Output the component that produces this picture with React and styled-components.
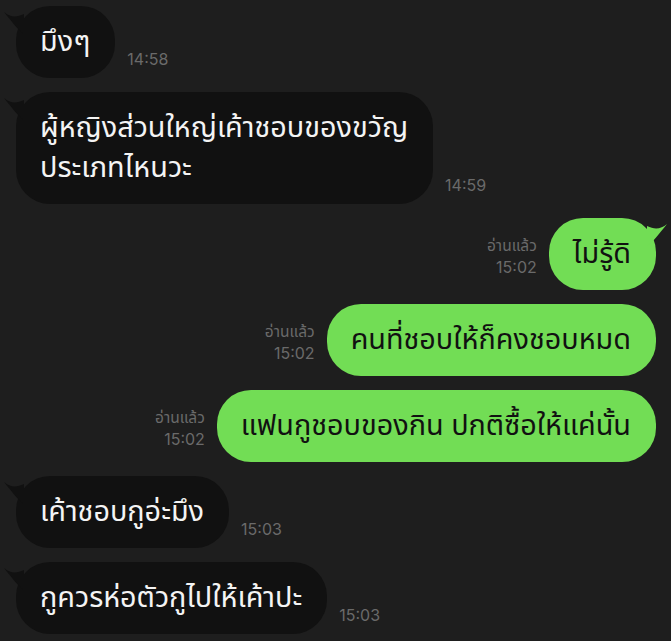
import React from 'react'
import styled, { createGlobalStyle } from 'styled-components'

const thai = '"Noto Sans Thai", "Noto Sans", sans-serif'

const GlobalStyle = createGlobalStyle`
  html, body {
    margin: 0;
    padding: 0;
    background: #1e1e1e;
  }
  body {
    font-family: ${thai};
  }
`

const Chat = styled.div`
  width: 671px;
  height: 641px;
  overflow: hidden;
  box-sizing: border-box;
  padding: 6px 15px 0 16px;
  display: flex;
  flex-direction: column;
  gap: 14px;
  background: #1e1e1e;
`

const Row = styled.div`
  display: flex;
  align-items: flex-end;
  flex-direction: ${p => (p.$mine ? 'row-reverse' : 'row')};
  gap: 12px;
`

const Bubble = styled.div`
  position: relative;
  padding: 16px 25px 16px 24px;
  border-radius: 34px;
  font-size: 28.8px;
  line-height: 40px;
  white-space: pre-line;
  background: ${p => (p.$mine ? '#72dd55' : '#111111')};
  color: ${p => (p.$mine ? '#111111' : '#f4f4f4')};
`

const Tail = styled.svg`
  position: absolute;
  top: 2px;
  width: 20px;
  height: 26px;
  ${p => (p.$mine ? 'right: -11px; transform: scaleX(-1);' : 'left: -12px;')}
`

const Meta = styled.div`
  display: flex;
  flex-direction: column;
  align-items: ${p => (p.$mine ? 'flex-end' : 'flex-start')};
  gap: 2px;
  margin-bottom: ${p => (p.$mine ? '14px' : '10px')};
  color: #6a6a6a;
  font-family: Inter, Roboto, sans-serif;
  font-size: 16px;
  line-height: 18px;
`

const Read = styled.span`
  font-family: ${thai};
  font-size: 15.5px;
  line-height: 18px;
`

const messages = [
  { text: 'มึงๆ', time: '14:58' },
  { text: 'ผู้หญิงส่วนใหญ่เค้าชอบของขวัญ\nประเภทไหนวะ', time: '14:59' },
  { text: 'ไม่รู้ดิ', time: '15:02', mine: true, tail: true },
  { text: 'คนที่ชอบให้ก็คงชอบหมด', time: '15:02', mine: true },
  { text: 'แฟนกูชอบของกิน ปกติซื้อให้แค่นั้น', time: '15:02', mine: true },
  { text: 'เค้าชอบกูอ่ะมึง', time: '15:03' },
  { text: 'กูควรห่อตัวกูไปให้เค้าปะ', time: '15:03' },
]

const Message = ({ text, time, mine, tail }) => (
  <Row $mine={mine}>
    <Bubble $mine={mine}>
      {(tail || !mine) && (
        <Tail $mine={mine} viewBox="0 0 20 26">
          <path
            d="M0 4 C6 9 12 10 20 6 L20 26 C14 22 8 14 0 4 Z"
            fill={mine ? '#72dd55' : '#111111'}
          />
        </Tail>
      )}
      {text}
    </Bubble>
    <Meta $mine={mine}>
      {mine && <Read>อ่านแล้ว</Read>}
      <span>{time}</span>
    </Meta>
  </Row>
)

const App = () => (
  <>
    <GlobalStyle />
    <Chat>
      {messages.map((m, i) => (
        <Message key={i} {...m} />
      ))}
    </Chat>
  </>
)

export default App
